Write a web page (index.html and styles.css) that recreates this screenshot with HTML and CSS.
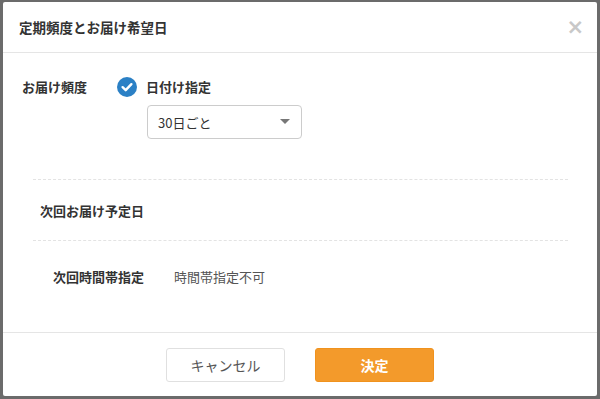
FILE: index.html
```html
<!DOCTYPE html>
<html lang="ja">
  <head>
    <meta charset="UTF-8" />
    <meta name="viewport" content="width=device-width, initial-scale=1.0" />
    <title>定期頻度とお届け希望日</title>
    <link rel="stylesheet" href="styles.css">
  </head>
  <body>

    <div class="modal">
      <div class="modal-header">
        <h2 class="modal-title">定期頻度とお届け希望日</h2>
        <span class="modal-close">&times;</span>
      </div>

      <div class="modal-body">
        <div class="freq-row">
          <div class="freq-label">お届け頻度</div>
          <div class="freq-options">
            <label class="check-option">
              <span class="check-circle">
                <svg width="20" height="20" viewBox="0 0 20 20">
                  <circle cx="10" cy="10" r="10" fill="#2b80c5" />
                  <path d="M5.6 10.2 L8.7 13.2 L14.4 7.2" fill="none" stroke="#fff" stroke-width="2.4" stroke-linecap="round" stroke-linejoin="round" />
                </svg>
              </span>
              日付け指定
            </label>
            <div class="select-box">
              <span>30日ごと</span>
              <span class="select-arrow"></span>
            </div>
          </div>
        </div>

        <div class="info-block">
          <div class="info-row next-date">
            <div class="info-label">次回お届け予定日</div>
          </div>
          <div class="info-row next-time">
            <div class="info-label">次回時間帯指定</div>
            <div class="info-value">時間帯指定不可</div>
          </div>
        </div>
      </div>

      <div class="modal-footer">
        <button class="btn btn-cancel">キャンセル</button>
        <button class="btn btn-ok">決定</button>
      </div>
    </div>

  </body>
</html>
```

FILE: styles.css
```css
  body {
    margin: 0;
    padding: 2px 3px 3px 3px;
    background-color: #6b6b6b;
    font-family: "Noto Sans CJK JP", "Noto Sans", sans-serif;
    color: #333;
    height: 399px;
    box-sizing: border-box;
  }

  .modal {
    background-color: #fff;
    width: 594px;
    height: 394px;
    border-radius: 2px;
    display: flex;
    flex-direction: column;
  }

  .modal-header {
    height: 50px;
    border-bottom: 1px solid #e5e5e5;
    display: flex;
    align-items: center;
    justify-content: space-between;
    padding: 0 13px 0 16px;
  }

  .modal-title {
    margin: 0;
    font-size: 13.5px;
    font-weight: bold;
    color: #333;
  }

  .modal-close {
    font-family: "DejaVu Sans", sans-serif;
    font-size: 21px;
    font-weight: bold;
    color: #c8c8c8;
    line-height: 1;
  }

  .modal-body {
    flex: 1;
    padding: 23px 29px 0 19px;
  }

  .freq-row {
    display: flex;
  }

  .freq-label {
    width: 95px;
    font-size: 13px;
    font-weight: bold;
    line-height: 20px;
    padding-top: 1px;
  }

  .check-option {
    display: flex;
    align-items: center;
    gap: 9px;
    font-size: 13px;
    font-weight: bold;
    line-height: 20px;
    height: 22px;
  }

  .check-circle {
    display: flex;
  }

  .select-box {
    margin-top: 7px;
    margin-left: 30px;
    width: 155px;
    height: 34px;
    box-sizing: border-box;
    border: 1px solid #ccc;
    border-radius: 4px;
    display: flex;
    align-items: center;
    justify-content: space-between;
    padding: 0 11px 0 10px;
    font-size: 13px;
  }

  .select-arrow {
    width: 0;
    height: 0;
    margin-top: -2px;
    border-left: 5px solid transparent;
    border-right: 5px solid transparent;
    border-top: 5px solid #777;
  }

  .info-block {
    margin-top: 40px;
    margin-left: 11px;
  }

  .info-row {
    display: flex;
    align-items: center;
    font-size: 13px;
  }

  .next-date {
    border-top: 1px dashed #e3e3e3;
    border-bottom: 1px dashed #e3e3e3;
    height: 60px;
    padding-left: 7px;
  }

  .next-time {
    height: 71px;
    padding-left: 20px;
  }

  .info-label {
    font-weight: bold;
    width: 121px;
  }

  .info-value {
    color: #555;
  }

  .modal-footer {
    border-top: 1px solid #e5e5e5;
    height: 64px;
    display: flex;
    justify-content: center;
    gap: 30px;
    padding-top: 15px;
    box-sizing: border-box;
  }

  .btn {
    width: 119px;
    height: 34px;
    border-radius: 3px;
    font-family: "Noto Sans CJK JP", "Noto Sans", sans-serif;
    font-size: 14px;
    cursor: pointer;
  }

  .btn-cancel {
    background-color: #fff;
    border: 1px solid #e0e0e0;
    color: #555;
  }

  .btn-ok {
    background-color: #f39a2b;
    border: 1px solid #f0921e;
    color: #fff;
    font-weight: bold;
  }
```
